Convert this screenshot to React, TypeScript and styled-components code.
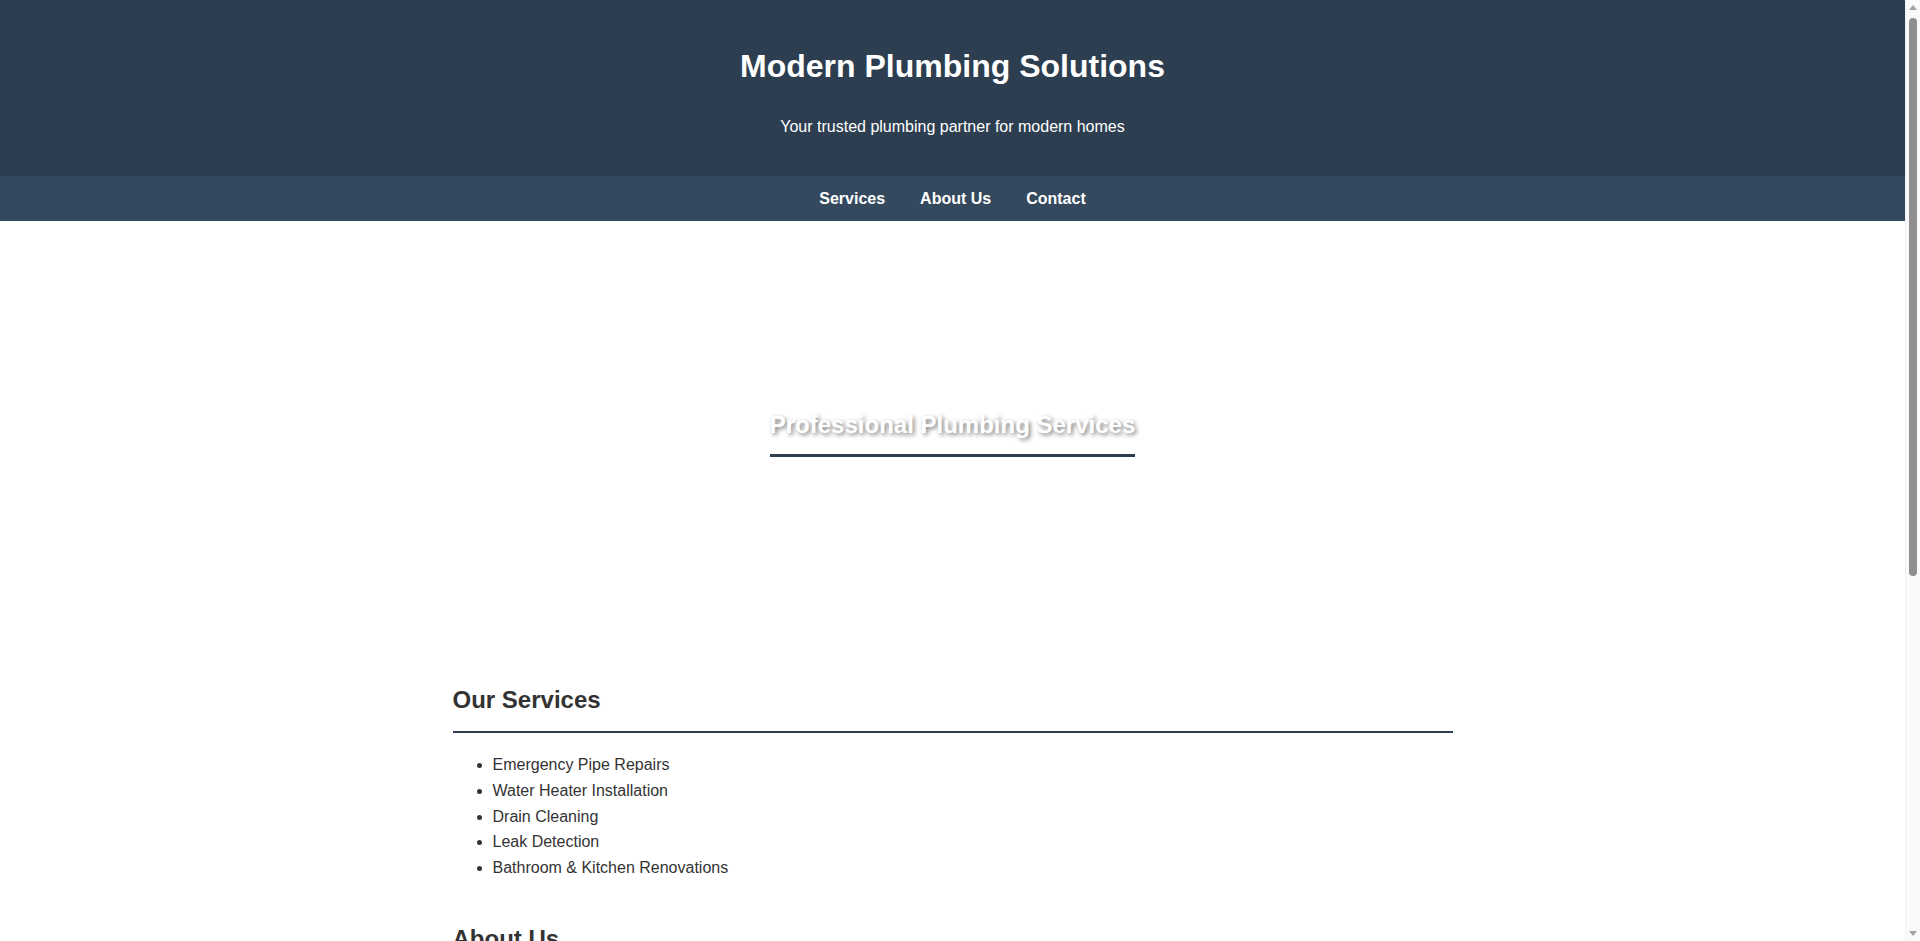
import styled, { createGlobalStyle } from 'styled-components';

const GlobalStyle = createGlobalStyle`
  body {
    margin: 0;
    font-family: "Liberation Sans", Arial, sans-serif;
    line-height: 1.6;
    color: #333;
    background: #fff;
  }
`;

const Shell = styled.div`
  display: grid;
  grid-template-columns: 1fr 15px;
  height: 100vh;
`;

const Page = styled.div`
  overflow-y: auto;
  scrollbar-width: none;
  &::-webkit-scrollbar {
    display: none;
  }
`;

const Rail = styled.div`
  display: flex;
  flex-direction: column;
  background: #fafafa;
  border-left: 1px solid #f0f0f0;
`;

const RailButton = styled.div`
  height: 15px;
  display: flex;
  align-items: center;
  justify-content: center;
`;

const RailTrack = styled.div`
  flex: 1;
  display: flex;
  justify-content: center;
`;

const Thumb = styled.div`
  margin-top: 3px;
  width: 8px;
  height: 558px;
  background: #8f8f8f;
  border-radius: 4px;
`;

const Header = styled.header`
  background: #2c3e50;
  color: #fff;
  text-align: center;
  padding: 20px;
  h1 {
    font-size: 32px;
    margin: 0.67em 0;
  }
  p {
    margin: 16px 0;
  }
`;

const Nav = styled.nav`
  background: #34495e;
  padding: 10px 0;
  display: flex;
  justify-content: center;
  gap: 35px;
  a {
    color: #fff;
    font-weight: bold;
    text-decoration: none;
  }
`;

const Hero = styled.section`
  height: 420px;
  display: flex;
  align-items: center;
  justify-content: center;
  h2 {
    margin: 0.83em 0;
    font-size: 24px;
    color: #fff;
    text-shadow: 2px 2px 4px rgba(0, 0, 0, 0.5);
    padding-bottom: 10px;
    border-bottom: 3px solid #2c3e50;
  }
`;

const Main = styled.main`
  max-width: 1000px;
  margin: 0 auto;
  padding: 20px 0;
`;

const Section = styled.section`
  margin-bottom: 40px;
  h2 {
    font-size: 24px;
    margin: 0.83em 0;
    padding-bottom: 11px;
    border-bottom: 2px solid #2c3e50;
  }
  ul {
    margin: 16px 0;
    padding-left: 40px;
  }
  p {
    margin: 16px 0;
  }
`;

const Footer = styled.footer`
  background: #2c3e50;
  color: #fff;
  text-align: center;
  padding: 24px 20px;
  p {
    margin: 0;
  }
`;

const services = [
  'Emergency Pipe Repairs',
  'Water Heater Installation',
  'Drain Cleaning',
  'Leak Detection',
  'Bathroom & Kitchen Renovations',
];

const Arrow = ({ down }: { down?: boolean }) => (
  <svg width="8" height="5" viewBox="0 0 8 5">
    <path d={down ? 'M0 0 L8 0 L4 5 Z' : 'M0 5 L8 5 L4 0 Z'} fill="#a3a3a3" />
  </svg>
);

export default function App() {
  return (
    <>
      <GlobalStyle />
      <Shell>
        <Page>
          <Header>
            <h1>Modern Plumbing Solutions</h1>
            <p>Your trusted plumbing partner for modern homes</p>
          </Header>
          <Nav>
            <a href="#services">Services</a>
            <a href="#about">About Us</a>
            <a href="#contact">Contact</a>
          </Nav>
          <Hero>
            <h2>Professional Plumbing Services</h2>
          </Hero>
          <Main>
            <Section id="services">
              <h2>Our Services</h2>
              <ul>
                {services.map((s) => (
                  <li key={s}>{s}</li>
                ))}
              </ul>
            </Section>
            <Section id="about">
              <h2>About Us</h2>
              <p>
                With over 20 years of experience, Modern Plumbing Solutions provides reliable, efficient and
                affordable plumbing services for residential and commercial properties.
              </p>
              <p>
                Our licensed technicians use the latest tools and technology to get the job done right the
                first time, with clear pricing and no hidden fees.
              </p>
            </Section>
            <Section id="contact">
              <h2>Contact</h2>
              <p>Phone: (555) 123-4567</p>
              <p>Email: info@modernplumbing.com</p>
              <p>Address: 123 Main Street, Springfield</p>
              <p>Hours: Monday to Saturday, 8am - 6pm</p>
              <p>Available 24/7 for emergencies</p>
            </Section>
          </Main>
          <Footer>
            <p>&copy; 2024 Modern Plumbing Solutions. All rights reserved.</p>
          </Footer>
        </Page>
        <Rail>
          <RailButton>
            <Arrow />
          </RailButton>
          <RailTrack>
            <Thumb />
          </RailTrack>
          <RailButton>
            <Arrow down />
          </RailButton>
        </Rail>
      </Shell>
    </>
  );
}
